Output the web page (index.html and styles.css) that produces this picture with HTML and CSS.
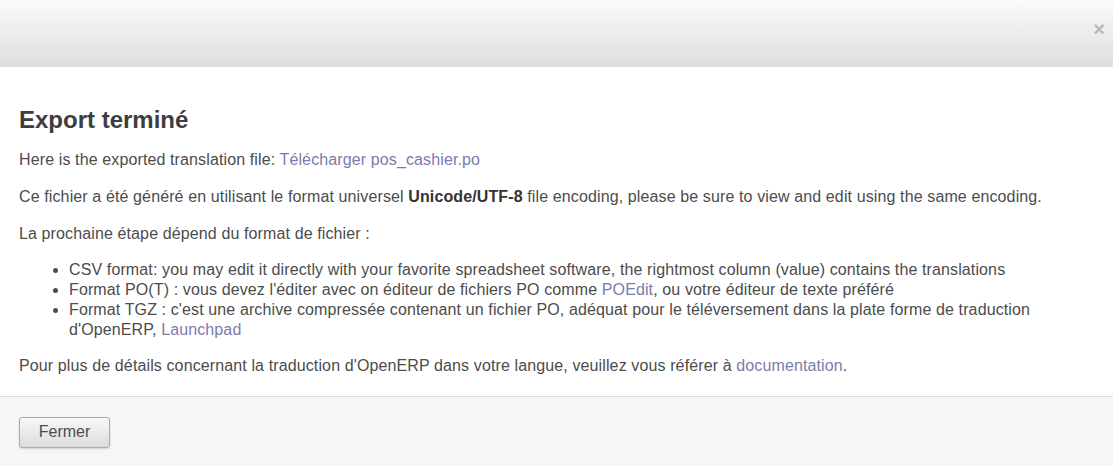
FILE: index.html
```html
<!DOCTYPE html>
<html>
<head>
<meta charset="utf-8">
<link rel="stylesheet" href="styles.css">
</head>
<body>
<div class="dialog">
  <div class="header">
    <span class="close">×</span>
  </div>
  <div class="content">
    <h2 class="title">Export terminé</h2>
    <p>Here is the exported translation file: <a href="#">Télécharger pos_cashier.po</a></p>
    <p>Ce fichier a été généré en utilisant le format universel <b>Unicode/UTF-8</b> file encoding, please be sure to view and edit using the same encoding.</p>
    <p>La prochaine étape dépend du format de fichier :</p>
    <ul class="list">
      <li>CSV format: you may edit it directly with your favorite spreadsheet software, the rightmost column (value) contains the translations</li>
      <li>Format PO(T) : vous devez l'éditer avec on éditeur de fichiers PO comme <a href="#">POEdit</a>, ou votre éditeur de texte préféré</li>
      <li>Format TGZ : c'est une archive compressée contenant un fichier PO, adéquat pour le téléversement dans la plate forme de traduction d'OpenERP, <a href="#">Launchpad</a></li>
    </ul>
    <p>Pour plus de détails concernant la traduction d'OpenERP dans votre langue, veuillez vous référer à <a href="#">documentation</a>.</p>
  </div>
  <div class="footer">
    <button class="btn">Fermer</button>
  </div>
</div>
</body>
</html>
```
FILE: styles.css
```css
html, body {
  margin: 0;
  padding: 0;
  background: #fff;
}
body {
  font-family: "Liberation Sans", Arial, sans-serif;
  font-size: 16px;
  color: #4c4c4c;
}
.dialog {
  width: 1113px;
  height: 466px;
  display: flex;
  flex-direction: column;
}
.header {
  height: 67px;
  background: linear-gradient(to bottom, #fafafa, #dedede);
  position: relative;
  flex: none;
}
.close {
  position: absolute;
  right: 8px;
  top: 19px;
  font-size: 20px;
  font-weight: bold;
  color: #b8b8b8;
  line-height: 1;
}
.content {
  flex: 1;
  padding: 40px 19px 0;
}
.title {
  margin: 0 0 17px;
  font-size: 24px;
  font-weight: bold;
  color: #3d3d3d;
  line-height: 26px;
}
p {
  margin: 0 0 17px;
  line-height: 20px;
  letter-spacing: 0.12px;
}
b {
  color: #333;
}
a {
  color: #7c7bad;
  text-decoration: none;
}
.list {
  margin: -1px 0 16px;
  padding-left: 50px;
  padding-right: 60px;
  letter-spacing: 0.12px;
}
.list li {
  line-height: 20px;
}
.footer {
  flex: none;
  height: 69px;
  border-top: 1px solid #dcdcdc;
  background: #f5f6f8;
  display: flex;
  align-items: center;
  padding: 0 19px;
}
.btn {
  font-family: "Liberation Sans", Arial, sans-serif;
  font-size: 16px;
  color: #4c4c4c;
  width: 91px;
  height: 31px;
  border: 1px solid #aaa;
  border-radius: 3px;
  background: linear-gradient(to bottom, #f8f8f8, #dcdcdc);
  box-shadow: 0 1px 2px rgba(0,0,0,0.15);
  margin-top: 1px;
}
```
